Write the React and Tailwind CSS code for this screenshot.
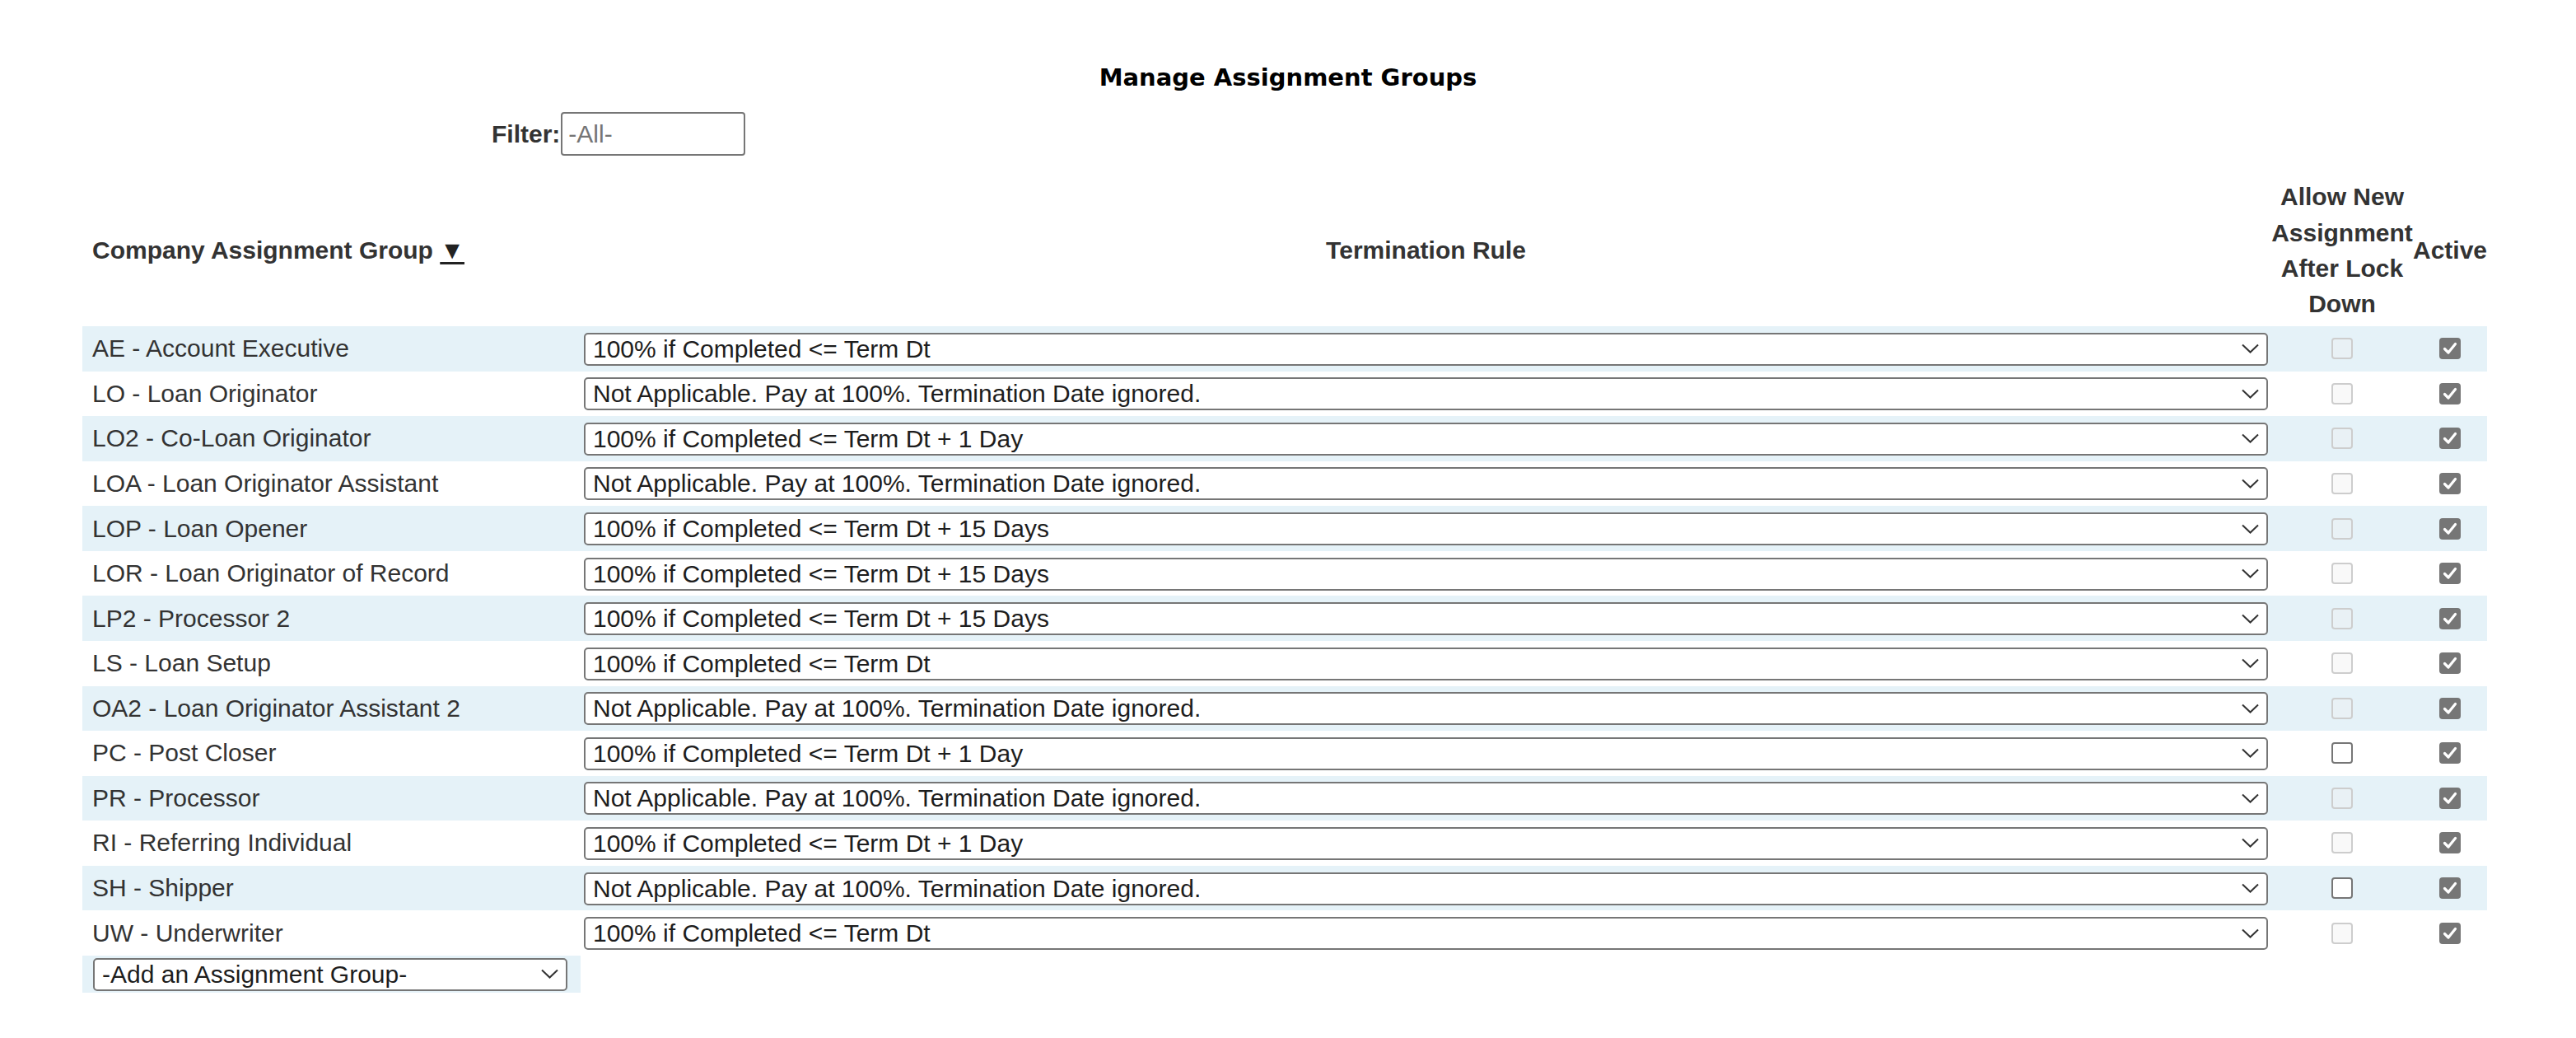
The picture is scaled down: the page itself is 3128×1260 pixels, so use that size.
import { useState } from 'react'

const RULES = [
  '100% if Completed <= Term Dt',
  '100% if Completed <= Term Dt + 1 Day',
  '100% if Completed <= Term Dt + 15 Days',
  'Not Applicable. Pay at 100%. Termination Date ignored.',
]

const GROUPS = [
  { name: 'AE - Account Executive', rule: RULES[0], allowEnabled: false },
  { name: 'LO - Loan Originator', rule: RULES[3], allowEnabled: false },
  { name: 'LO2 - Co-Loan Originator', rule: RULES[1], allowEnabled: false },
  { name: 'LOA - Loan Originator Assistant', rule: RULES[3], allowEnabled: false },
  { name: 'LOP - Loan Opener', rule: RULES[2], allowEnabled: false },
  { name: 'LOR - Loan Originator of Record', rule: RULES[2], allowEnabled: false },
  { name: 'LP2 - Processor 2', rule: RULES[2], allowEnabled: false },
  { name: 'LS - Loan Setup', rule: RULES[0], allowEnabled: false },
  { name: 'OA2 - Loan Originator Assistant 2', rule: RULES[3], allowEnabled: false },
  { name: 'PC - Post Closer', rule: RULES[1], allowEnabled: true },
  { name: 'PR - Processor', rule: RULES[3], allowEnabled: false },
  { name: 'RI - Referring Individual', rule: RULES[1], allowEnabled: false },
  { name: 'SH - Shipper', rule: RULES[3], allowEnabled: true },
  { name: 'UW - Underwriter', rule: RULES[0], allowEnabled: false },
]

function Chevron() {
  return (
    <svg width="21" height="12" viewBox="0 0 21 12" className="pointer-events-none absolute right-[11px] top-1/2 -translate-y-1/2">
      <polyline points="1,1.5 10.5,10.5 20,1.5" fill="none" stroke="#333" strokeWidth="2" />
    </svg>
  )
}

function Select({ value, options, className = '' }) {
  const [val, setVal] = useState(value)
  return (
    <div className={`relative ${className}`}>
      <select
        value={val}
        onChange={(e) => setVal(e.target.value)}
        className="h-[40px] w-full appearance-none rounded-[5px] border-2 border-[#767676] bg-white pl-[9px] pr-[40px] text-[30px] leading-[34px] text-[#1d1d1d] outline-none"
      >
        {options.map((o) => (
          <option key={o} value={o}>
            {o}
          </option>
        ))}
      </select>
      <Chevron />
    </div>
  )
}

function Checkbox({ checked, disabled }) {
  if (checked) {
    return (
      <span className="flex h-[26px] w-[26px] items-center justify-center rounded-[4px] bg-[#767676]">
        <svg width="20" height="20" viewBox="0 0 20 20">
          <polyline points="3.5,10.5 8,15 16.5,4.5" fill="none" stroke="#fff" strokeWidth="3.2" strokeLinecap="round" strokeLinejoin="round" />
        </svg>
      </span>
    )
  }
  return (
    <span
      className={`block h-[26px] w-[26px] rounded-[4px] border-2 ${
        disabled ? 'border-[#cdcdcd] bg-[rgba(239,239,239,0.4)]' : 'border-[#767676] bg-white'
      }`}
    />
  )
}

export default function App() {
  return (
    <div className="min-h-screen w-[3128px] bg-white font-['Liberation_Sans',Arial,sans-serif] text-[30px] text-[#333]">
      <h1 className="pt-[74px] text-center font-['DejaVu_Sans',Verdana,sans-serif] text-[29px] leading-[40px] font-bold text-black">
        Manage Assignment Groups
      </h1>

      <div className="mt-[22px] flex items-center pl-[597px]">
        <label className="font-bold leading-[34px]">Filter:</label>
        <input
          placeholder="-All-"
          className="ml-[1px] h-[53px] w-[224px] rounded-[4px] border-2 border-[#767676] px-[7px] text-[30px] text-[#1d1d1d] outline-none placeholder:text-[#757575]"
        />
      </div>

      <div className="mt-[23px] ml-[100px] w-[2920px]">
        <div className="grid h-[184px] grid-cols-[605px_2053px_172px_90px] items-center font-bold leading-[43.3px]">
          <div className="pl-[12px]">
            Company Assignment Group <span className="text-[#222] underline underline-offset-[4px]">▼</span>
          </div>
          <div className="text-center">Termination Rule</div>
          <div className="text-center">
            Allow New
            <br />
            Assignment
            <br />
            After Lock
            <br />
            Down
          </div>
          <div className="text-center">Active</div>
        </div>

        {GROUPS.map((g, i) => (
          <div
            key={g.name}
            className={`grid h-[54.57px] grid-cols-[605px_2053px_172px_90px] items-center ${
              i % 2 === 0 ? 'bg-[#e5f2f8]' : 'bg-white'
            }`}
          >
            <div className="pl-[12px] leading-[34px] whitespace-nowrap">{g.name}</div>
            <div className="px-[4px]">
              <Select value={g.rule} options={RULES} />
            </div>
            <div className="flex justify-center">
              <Checkbox checked={false} disabled={!g.allowEnabled} />
            </div>
            <div className="flex justify-center">
              <Checkbox checked />
            </div>
          </div>
        ))}

        <div className="grid h-[45px] grid-cols-[605px_2053px_172px_90px] items-center">
          <div className="flex h-full items-center bg-[#e5f2f8] pl-[13px]">
            <Select value="-Add an Assignment Group-" options={['-Add an Assignment Group-']} className="w-[576px]" />
          </div>
        </div>
      </div>
    </div>
  )
}
